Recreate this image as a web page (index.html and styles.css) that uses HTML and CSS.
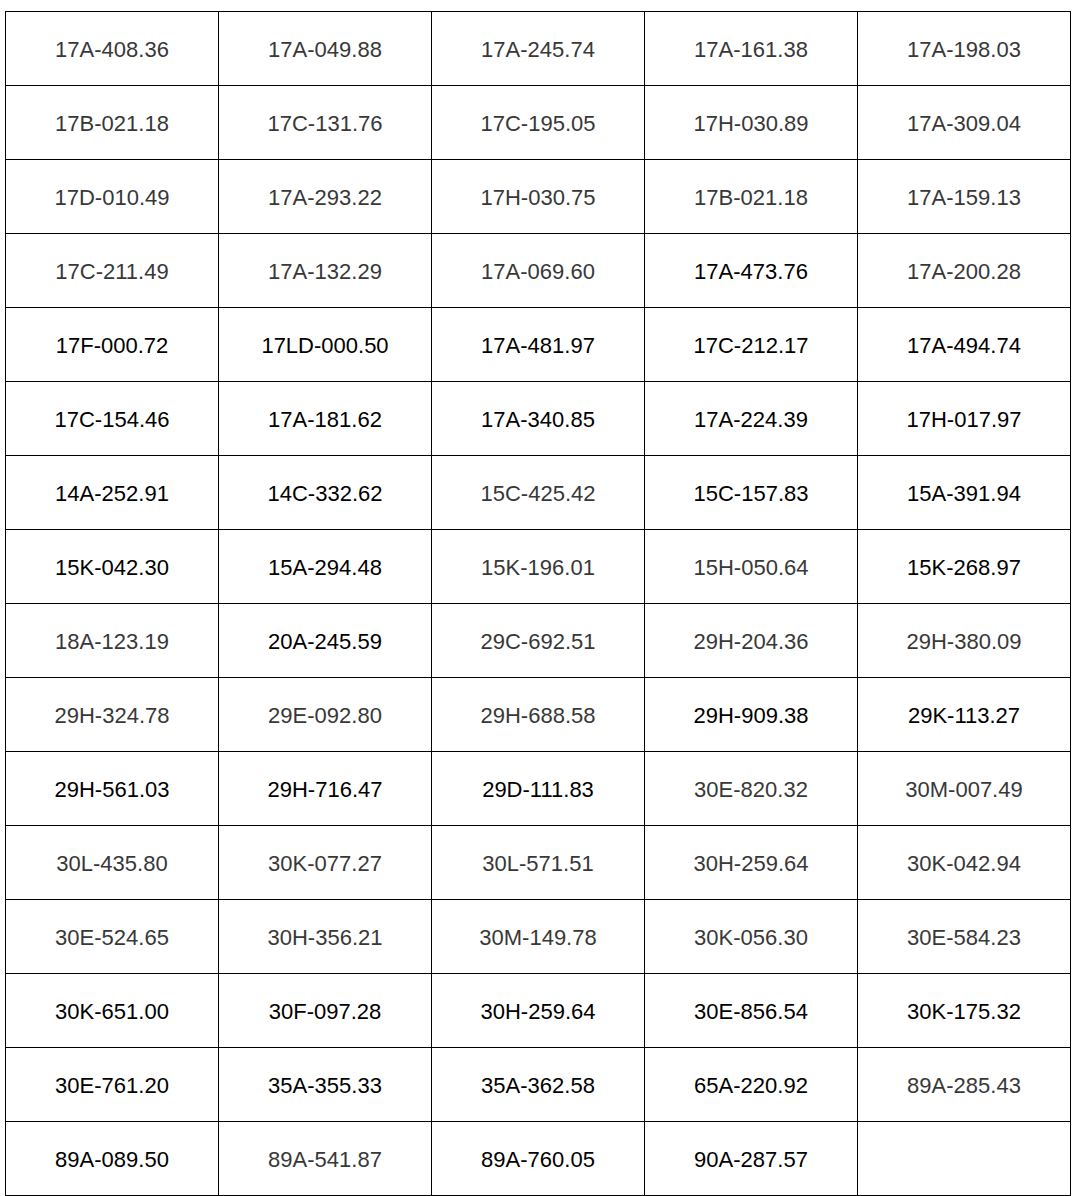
FILE: index.html
```html
<!DOCTYPE html>
<html>
<head>
<meta charset="utf-8">
<link rel="stylesheet" href="styles.css">
</head>
<body>
<table class="grid">
<tr><td class="g">17A-408.36</td><td class="g">17A-049.88</td><td class="g">17A-245.74</td><td class="g">17A-161.38</td><td class="g">17A-198.03</td></tr>
<tr><td class="g">17B-021.18</td><td class="g">17C-131.76</td><td class="g">17C-195.05</td><td class="g">17H-030.89</td><td class="g">17A-309.04</td></tr>
<tr><td class="g">17D-010.49</td><td class="g">17A-293.22</td><td class="g">17H-030.75</td><td class="g">17B-021.18</td><td class="g">17A-159.13</td></tr>
<tr><td class="g">17C-211.49</td><td class="g">17A-132.29</td><td class="g">17A-069.60</td><td>17A-473.76</td><td class="g">17A-200.28</td></tr>
<tr><td>17F-000.72</td><td>17LD-000.50</td><td>17A-481.97</td><td>17C-212.17</td><td>17A-494.74</td></tr>
<tr><td>17C-154.46</td><td>17A-181.62</td><td>17A-340.85</td><td>17A-224.39</td><td>17H-017.97</td></tr>
<tr><td>14A-252.91</td><td>14C-332.62</td><td class="g">15C-425.42</td><td>15C-157.83</td><td>15A-391.94</td></tr>
<tr><td>15K-042.30</td><td>15A-294.48</td><td class="g">15K-196.01</td><td class="g">15H-050.64</td><td>15K-268.97</td></tr>
<tr><td class="g">18A-123.19</td><td>20A-245.59</td><td class="g">29C-692.51</td><td class="g">29H-204.36</td><td class="g">29H-380.09</td></tr>
<tr><td class="g">29H-324.78</td><td class="g">29E-092.80</td><td class="g">29H-688.58</td><td>29H-909.38</td><td>29K-113.27</td></tr>
<tr><td>29H-561.03</td><td>29H-716.47</td><td>29D-111.83</td><td class="g">30E-820.32</td><td class="g">30M-007.49</td></tr>
<tr><td class="g">30L-435.80</td><td class="g">30K-077.27</td><td class="g">30L-571.51</td><td class="g">30H-259.64</td><td class="g">30K-042.94</td></tr>
<tr><td class="g">30E-524.65</td><td class="g">30H-356.21</td><td class="g">30M-149.78</td><td class="g">30K-056.30</td><td class="g">30E-584.23</td></tr>
<tr><td>30K-651.00</td><td>30F-097.28</td><td>30H-259.64</td><td>30E-856.54</td><td>30K-175.32</td></tr>
<tr><td>30E-761.20</td><td>35A-355.33</td><td>35A-362.58</td><td>65A-220.92</td><td class="g">89A-285.43</td></tr>
<tr><td>89A-089.50</td><td class="g">89A-541.87</td><td>89A-760.05</td><td>90A-287.57</td><td></td></tr>
</table>
</body>
</html>
```

FILE: styles.css
```css
html, body {
  margin: 0;
  padding: 0;
  background: #ffffff;
}
body {
  padding: 11px 0 0 5px;
  font-family: "Liberation Sans", Arial, sans-serif;
}
.grid {
  border-collapse: collapse;
  table-layout: fixed;
  width: 1066px;
  height: 1183px;
}
.grid td {
  border: 1px solid #000000;
  text-align: center;
  vertical-align: middle;
  font-size: 22px;
  color: #000000;
  padding: 2px 0 0 0;
  height: 71px;
}
.grid td.g {
  color: #383838;
}
```
